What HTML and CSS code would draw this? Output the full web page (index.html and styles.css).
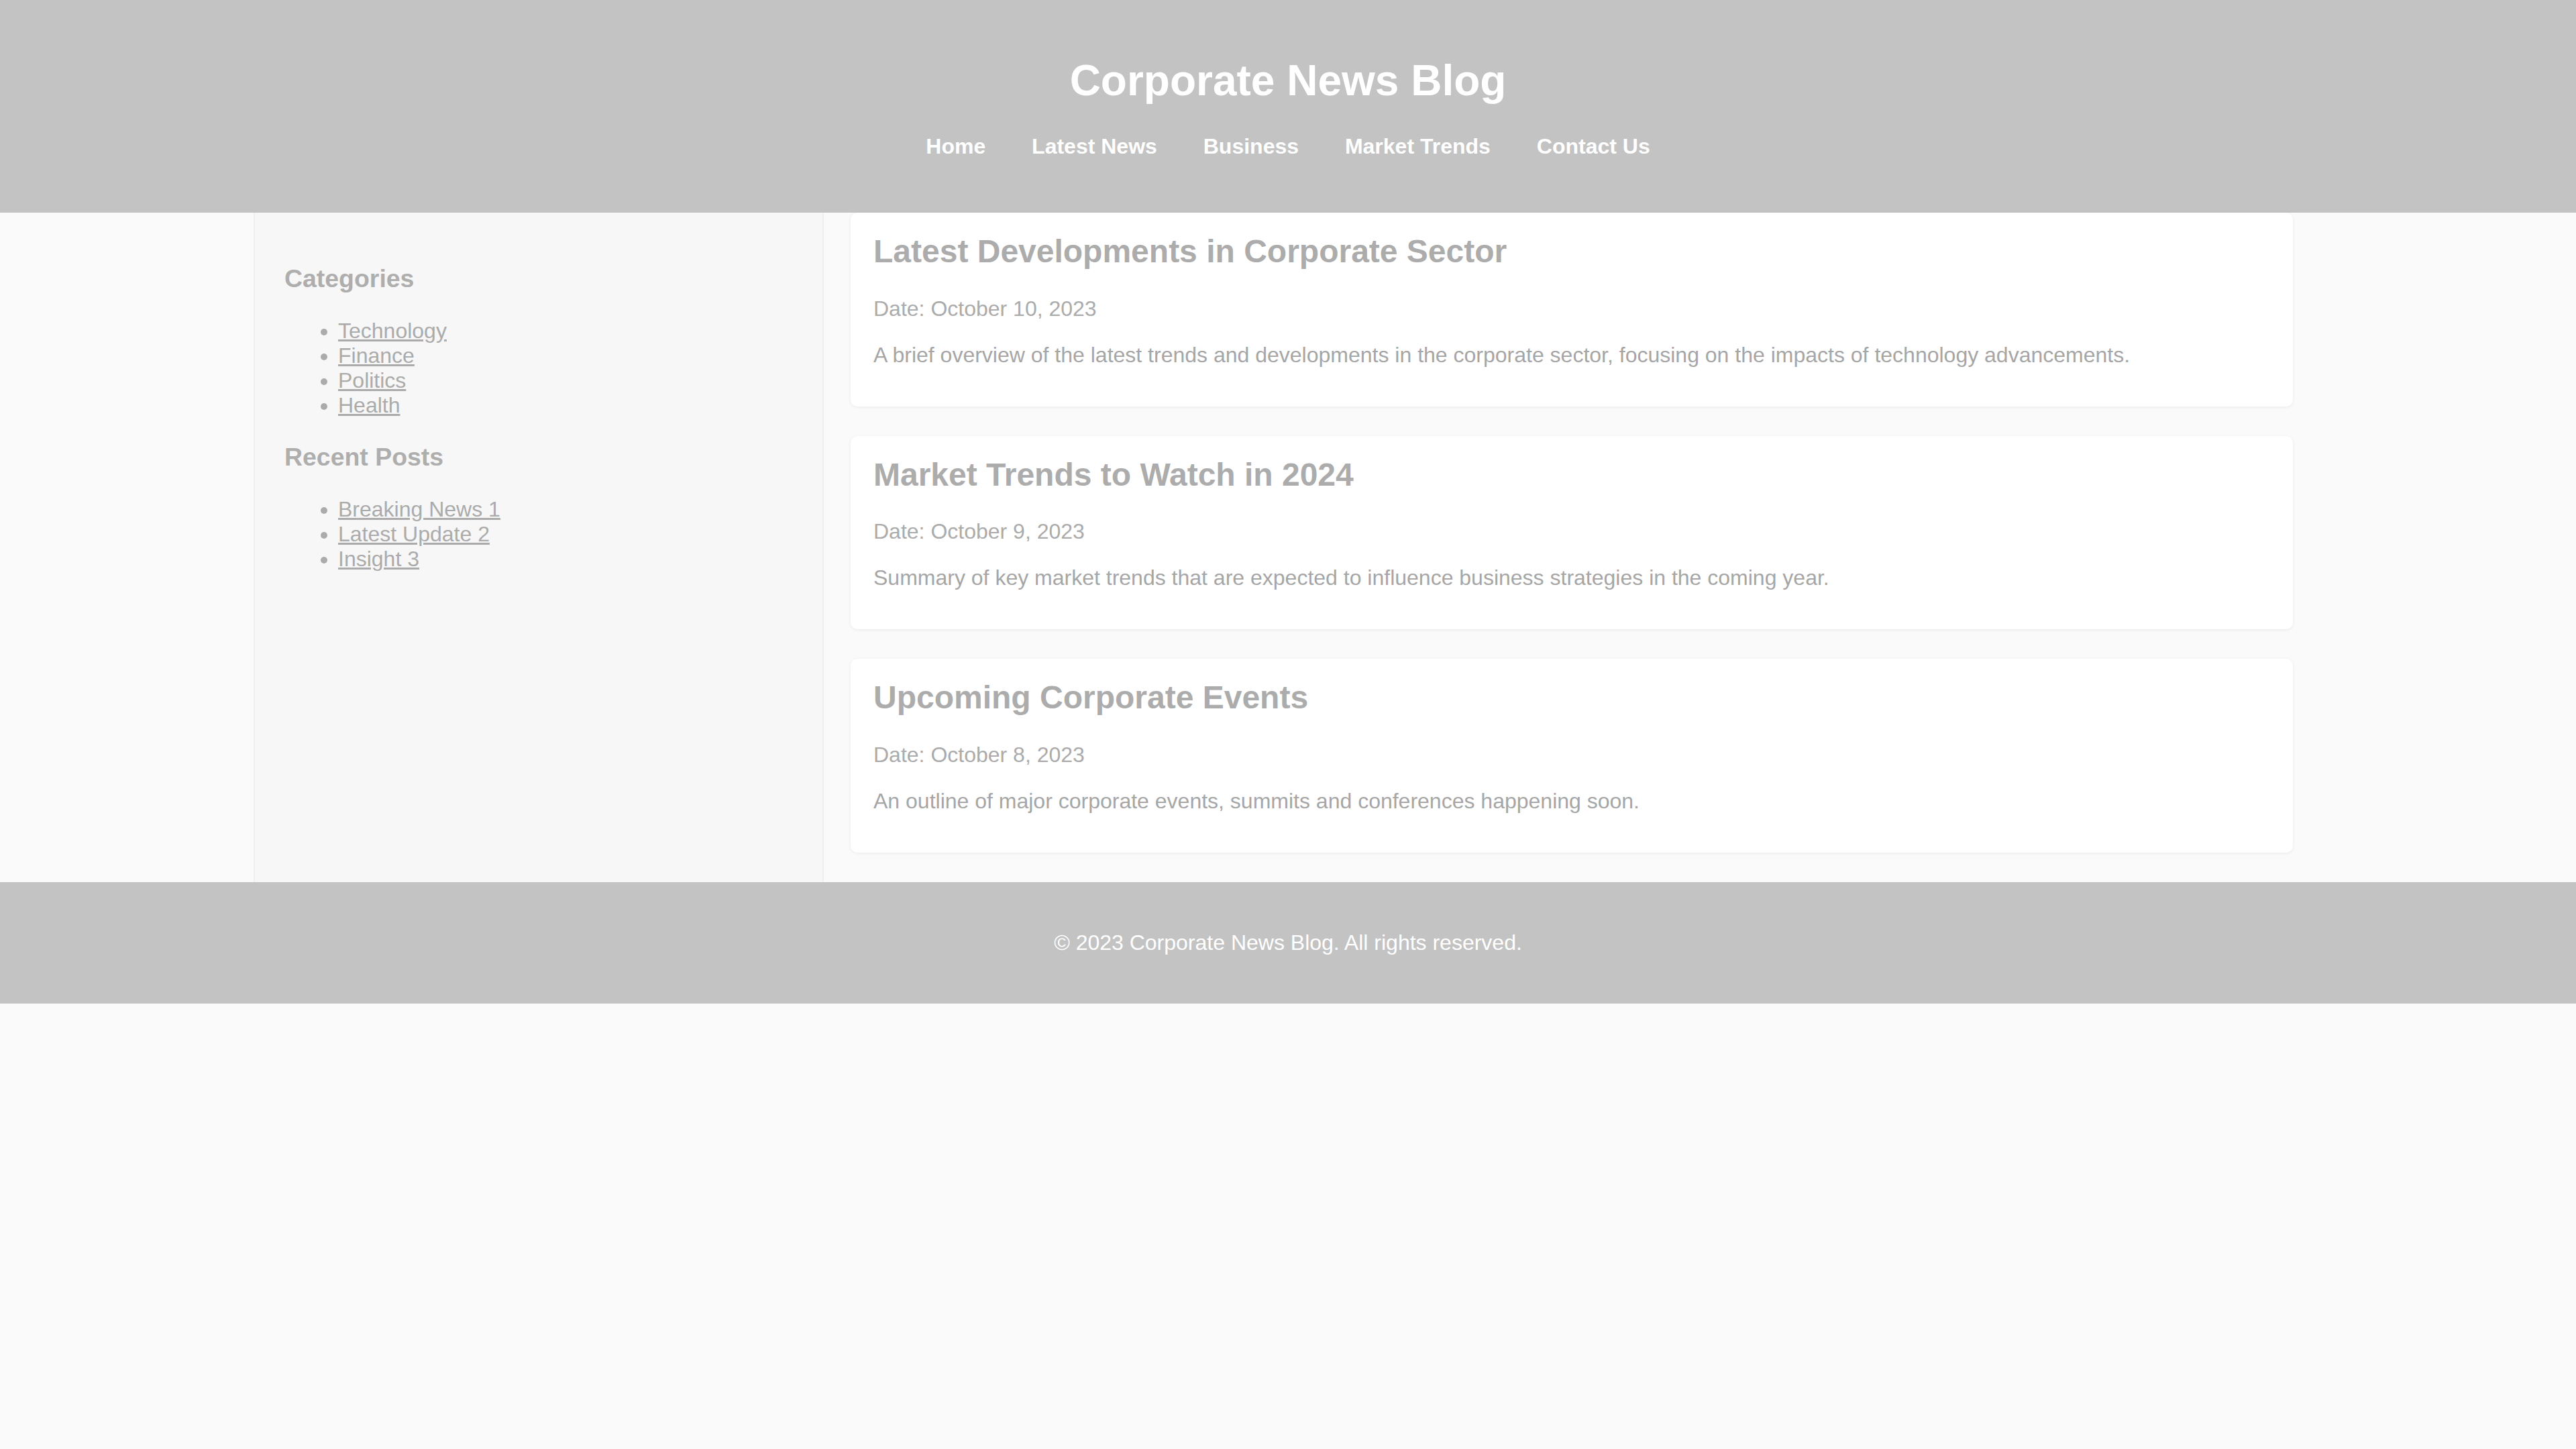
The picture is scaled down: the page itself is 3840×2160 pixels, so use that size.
FILE: index.html
```html
<!DOCTYPE html>
<html lang="en">
<head>
<meta charset="utf-8">
<title>Corporate News Blog</title>
<link rel="stylesheet" href="styles.css">
</head>
<body>
<header class="site-header">
  <h1 class="site-title">Corporate News Blog</h1>
  <nav class="site-nav">
    <ul class="nav-list">
      <li class="nav-item"><a class="nav-link" href="#">Home</a></li>
      <li class="nav-item"><a class="nav-link" href="#">Latest News</a></li>
      <li class="nav-item"><a class="nav-link" href="#">Business</a></li>
      <li class="nav-item"><a class="nav-link" href="#">Market Trends</a></li>
      <li class="nav-item"><a class="nav-link" href="#">Contact Us</a></li>
    </ul>
  </nav>
</header>
<div class="container">
  <aside class="sidebar">
    <h3 class="side-title">Categories</h3>
    <ul class="side-list">
      <li><a class="side-link" href="#">Technology</a></li>
      <li><a class="side-link" href="#">Finance</a></li>
      <li><a class="side-link" href="#">Politics</a></li>
      <li><a class="side-link" href="#">Health</a></li>
    </ul>
    <h3 class="side-title">Recent Posts</h3>
    <ul class="side-list">
      <li><a class="side-link" href="#">Breaking News 1</a></li>
      <li><a class="side-link" href="#">Latest Update 2</a></li>
      <li><a class="side-link" href="#">Insight 3</a></li>
    </ul>
  </aside>
  <main class="posts">
    <article class="post">
      <h2 class="post-title">Latest Developments in Corporate Sector</h2>
      <p class="post-date">Date: October 10, 2023</p>
      <p class="post-text">A brief overview of the latest trends and developments in the corporate sector, focusing on the impacts of technology advancements.</p>
    </article>
    <article class="post">
      <h2 class="post-title">Market Trends to Watch in 2024</h2>
      <p class="post-date">Date: October 9, 2023</p>
      <p class="post-text">Summary of key market trends that are expected to influence business strategies in the coming year.</p>
    </article>
    <article class="post">
      <h2 class="post-title">Upcoming Corporate Events</h2>
      <p class="post-date">Date: October 8, 2023</p>
      <p class="post-text">An outline of major corporate events, summits and conferences happening soon.</p>
    </article>
  </main>
</div>
<footer class="site-footer">
  <p class="footer-text">&copy; 2023 Corporate News Blog. All rights reserved.</p>
</footer>
</body>
</html>
```
FILE: styles.css
```css
html {
  background: #fafafa;
}
body {
  margin: 0;
  background: #fafafa;
  font-family: "Liberation Sans", Arial, sans-serif;
  font-size: 32px;
  color: #a8a8a8;
}
.site-header {
  background: #c3c3c3;
  color: #ffffff;
  text-align: center;
  padding: 40px 0;
}
.site-title {
  font-size: 64px;
  margin: 42.88px 0;
  font-weight: bold;
}
.nav-list {
  list-style: none;
  margin: 40px 0;
  padding: 0;
}
.nav-item {
  display: inline;
  margin: 0 30px;
}
.nav-link {
  color: #ffffff;
  text-decoration: none;
  font-weight: bold;
  font-size: 32px;
}
.container {
  display: flex;
  gap: 40px;
  max-width: 3084px;
  margin: 0 auto;
  padding-right: 44px;
  box-sizing: border-box;
}
.sidebar {
  flex: none;
  width: 850px;
  box-sizing: border-box;
  background: #f7f7f7;
  border-left: 2px solid #efefef;
  border-right: 2px solid #efefef;
  padding: 40px 40px 40px 44px;
}
.side-title {
  font-size: 37.44px;
  margin: 37.44px 0;
  color: #aeaeae;
}
.side-list {
  margin: 32px 0;
  padding-left: 80px;
  color: #ababab;
}
.side-link {
  color: #ababab;
  text-decoration: underline;
}
.posts {
  flex: 1;
  min-width: 0;
}
.post {
  background: #ffffff;
  border-radius: 10px;
  padding: 30px 34px 26px;
  margin-bottom: 44px;
  box-shadow: 0 1px 5px rgba(0, 0, 0, 0.07);
}
.post-title {
  font-size: 48px;
  margin: 0 0 39.84px;
  color: #acacac;
}
.post-date {
  margin: 32px 0;
  color: #ababab;
}
.post-text {
  margin: 32px 0;
  color: #a6a6a6;
}
.site-footer {
  background: #c3c3c3;
  color: #ffffff;
  text-align: center;
  padding: 40px;
}
.footer-text {
  margin: 32px 0;
  font-size: 32px;
}
```
